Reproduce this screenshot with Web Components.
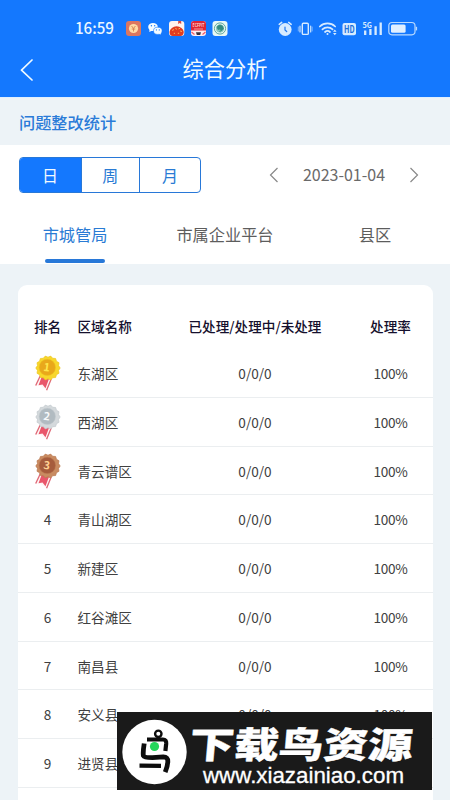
<!DOCTYPE html>
<html lang="zh-CN"><head><meta charset="utf-8"><title>综合分析</title>
<style>
html,body{margin:0;padding:0}
body{width:450px;height:800px;overflow:hidden;background:#edf3f7;font-family:"Noto Sans CJK SC",sans-serif}
</style></head><body>
<analysis-page></analysis-page>
<script>
function define(name, render){
  customElements.define(name, class extends HTMLElement{
    connectedCallback(){
      if(this.shadowRoot) return;
      this.attachShadow({mode:'open'}).innerHTML = render(this);
    }
  });
}

define('status-bar', () => `
<style>:host{display:block;height:42px}svg{display:block}text{font-family:"Noto Sans CJK SC",sans-serif}</style>
<svg width="450" height="42" viewBox="0 0 450 42" fill="none">
 <text x="75" y="34.1" font-size="15.4" font-weight="500" fill="#e9f6ff" textLength="39" lengthAdjust="spacingAndGlyphs">16:59</text>
 <rect x="126" y="21" width="15" height="15" rx="3" fill="#dc765f"/><circle cx="133.5" cy="28.5" r="4.6" fill="#ffdba5"/>
 <path d="M131.6 26l1.9 2.5 1.9-2.5M133.5 28.5v3M131.8 29h3.4" stroke="#d4814f" stroke-width=".9"/>
 <ellipse cx="153" cy="27" rx="4.8" ry="4.1" fill="#f4fbff"/><path d="M149.6 29l-.3 3 3-1.4z" fill="#f4fbff"/>
 <ellipse cx="157.8" cy="30.8" rx="4.3" ry="3.6" fill="#f4fbff" stroke="#1478fe" stroke-width=".6"/><path d="M159 33l1.7 1.8.1-2.7z" fill="#f4fbff"/>
 <g fill="#1478fe"><circle cx="151.4" cy="25.8" r=".7"/><circle cx="154.7" cy="25.8" r=".7"/><circle cx="156.4" cy="29.9" r=".6"/><circle cx="159.3" cy="29.9" r=".6"/></g>
 <rect x="169" y="21" width="15.3" height="15" rx="3" fill="#fff3ed"/><path d="M169.5 32a7.2 6.5 0 0 1 14.3 0c-.2 2.8-1.6 4-3.2 4h-8c-1.8 0-3-1.3-3.1-4z" fill="#e13c21"/>
 <path d="M178.2 21h3v3.1l-1.5-1-1.5 1z" fill="#d64942"/><path d="M172.2 30.4l1.7-.8M175.4 28.5l1.5.7M178.5 28.9l1.5-.6M180.2 31l1.7.5M173.8 33.3h1.2M177.8 33.3h1.4" stroke="#ffbb58" stroke-width="1"/>
 <rect x="191" y="21" width="15" height="15" rx="3" fill="#ffecef"/><path d="M191 24a3 3 0 0 1 3-3h9a3 3 0 0 1 3 3v6.5h-15z" fill="#df2636"/>
 <text x="192.6" y="27.3" font-size="5" font-weight="700" fill="#ffd3cc" textLength="11.8" lengthAdjust="spacingAndGlyphs">ECFPIT</text>
 <path d="M194 29h9" stroke="#ffb9b0" stroke-width=".8"/><path d="M196 32.2h5l-.8 2.8h-3.4z" fill="#3b3440"/><path d="M191.5 32l3 2.5M205.5 32l-3 2.5" stroke="#ef5966" stroke-width="1.2"/>
 <rect x="212.5" y="21" width="15" height="15" rx="3" fill="#e9f8f3"/><circle cx="220" cy="28.5" r="5.6" stroke="#4e9f94" stroke-width=".9"/><circle cx="220" cy="28.5" r="4" fill="#8bc7bd"/>
 <path d="M217 27c2-3 4-2 5.5-1l1 3-2.5 2-1-2-2 .5zM219 31l2 1" fill="#338c80" stroke="#338c80" stroke-width=".7"/>
 <g stroke="#d7ebff" stroke-linecap="round">
  <circle cx="285.2" cy="29.5" r="6.4" fill="#d7ebff" stroke="none"/><path d="M279.2 24.4l2.5-2M291.2 24.4l-2.5-2" stroke-width="1.5"/><path d="M285 27v3l1.7 1.5" stroke="#2278ee" stroke-width="1.2"/>
  <rect x="302.3" y="23.2" width="6" height="11.2" rx="1" stroke-width="1.4"/><path d="M300 26v6M310.7 26v6" stroke-width="1.1"/><path d="M298.3 27v4M312.2 27v4" stroke-width=".5"/>
  <path d="M319.8 26.5a11.3 11.3 0 0 1 15.4 0M322.4 29.4a7.3 7.3 0 0 1 10.2 0M325 32a3.7 3.7 0 0 1 5 0" stroke-width="1.7"/><circle cx="327.5" cy="34" r="1" fill="#d7ebff" stroke="none"/>
 </g>
 <path d="M333 31.7l1.8-2.2 1.8 2.2zM333 33l1.8 2.2 1.8-2.2z" fill="#d7ebff"/>
 <rect x="342.5" y="23" width="13.5" height="12.3" rx="2" fill="#d7ebff"/><text x="344" y="33" font-size="10" font-weight="700" fill="#1d70da" textLength="10.6" lengthAdjust="spacingAndGlyphs">HD</text>
 <text x="362.5" y="28" font-size="7.5" font-weight="700" fill="#d7ebff" textLength="9.5" lengthAdjust="spacingAndGlyphs">5G</text>
 <path d="M365.2 35v-4.5M370.4 35v-6M375.6 35v-8.8M380.7 35V22.6" stroke="#d7ebff" stroke-width="2.3"/>
 <rect x="388.8" y="22.5" width="26.2" height="12.3" rx="3.2" stroke="#b8d9ff" stroke-width="1.2"/><rect x="391" y="24.5" width="14.6" height="8.2" rx="1.5" fill="#e0efff"/><path d="M416.4 26.8v3.6" stroke="#b8d9ff" stroke-width="1.4"/>
</svg>`);

define('nav-bar', () => `
<style>:host{display:grid;grid-template-columns:60px 1fr 60px;height:55px;align-items:center;color:#f0faff}
svg{display:block;margin-left:20px}h1{font-size:21.2px;line-height:30px;margin:0;padding-bottom:3px;text-align:center;font-weight:400}</style>
<svg width="14" height="22" viewBox="0 0 14 22" fill="none" stroke="currentColor" stroke-width="1.7" stroke-linecap="round" stroke-linejoin="round"><path d="M12 1L1.5 11.2 12 21"/></svg>
<h1><slot></slot></h1>`);

define('section-title', () => `
<style>:host{display:flex;height:47.5px;padding:0 19px;align-items:center;box-sizing:border-box;border-top:1px solid #dfefff;color:#2a7bd8;font-size:16.2px;font-weight:500;line-height:24px}
span{padding-top:1px}</style><span><slot></slot></span>`);

define('period-switch', () => `
<style>:host{display:grid;grid-template-columns:61px 58.5px 1fr;width:182.5px;height:36.5px;box-sizing:border-box;border:1.5px solid #2878d8;border-radius:4px;overflow:hidden;color:#2a7bd4;font-size:16px}
span{display:flex;align-items:center;justify-content:center;border-left:1.5px solid #2878d8}
.on{background:#1478fe;color:#f2faff;border-left:0}</style>
<span class="on">日</span><span>周</span><span>月</span>`);

define('date-picker', () => `
<style>:host{display:flex;align-items:center;justify-content:space-between;width:150px;color:#6a6a6a;font-size:16px}
svg{display:block}span{padding-bottom:1px}</style>
<svg width="10" height="16" viewBox="0 0 10 16" fill="none" stroke="#888" stroke-width="1.2"><path d="M8.5 1L1.5 8l7 7"/></svg>
<span><slot></slot></span>
<svg width="10" height="16" viewBox="0 0 10 16" fill="none" stroke="#888" stroke-width="1.2"><path d="M1.5 1l7 7-7 7"/></svg>`);

define('tab-item', () => `
<style>:host{display:flex;flex-direction:column;align-items:center;justify-content:space-between;width:150px;color:#5d5d5d;font-size:16.2px;line-height:24px}
i{display:block;width:60px;height:4px;border-radius:2px}
:host([active]){color:#2a7bd4}:host([active]) i{background:#2878d8}</style><slot></slot><i></i>`);

define('filter-panel', () => `
<style>:host{display:flex;flex-direction:column;height:119px;background:#fff;box-sizing:border-box;padding-top:12px}
.top{display:flex;height:36.5px;justify-content:space-between;padding:0 31px 0 18.5px;align-items:center}
.tabs{display:flex;margin-top:29px;height:41px}</style>
<div class="top"><period-switch></period-switch><date-picker>2023-01-04</date-picker></div>
<div class="tabs"><tab-item active>市城管局</tab-item><tab-item>市属企业平台</tab-item><tab-item>县区</tab-item></div>`);

define('rank-medal', el => {
  const rank = el.getAttribute('rank');
  const [rim, edge, face, ink] = {1:['#f8d72c','#ecc51e','#e9a81b','#ffe64c'],2:['#d4d9dc','#c1c9cd','#b1bbc1','#f7f9fa'],3:['#c98b61','#b9774f','#a65c3d','#ffd092']}[rank];
  let d = '';
  for(let i=0;i<28;i++){
    const a=i*Math.PI/14, r=i%2?10.8:12.2;
    d+=(i?'L':'M')+(15+r*Math.cos(a)).toFixed(2)+' '+(13+r*Math.sin(a)).toFixed(2);
  }
  return `<style>:host{display:block;width:30px;height:36px}svg{display:block}text{font-family:"Noto Sans CJK SC",sans-serif}</style>
<svg width="30" height="36" viewBox="0 0 30 36">
 <path d="M6.5 20L1.8 30.8 7 30.5l7.2 4.8 4.6-12z" fill="#fff4f4"/>
 <path d="M7.2 21l-4.5 9.5M18.2 24l-4.6 11.2" stroke="#df6876" stroke-width="1.3"/>
 <path d="M9 21L5.5 30.3l4-.8 3 3.7L16.3 23z" fill="#e9566b"/>
 <path d="${d}Z" fill="${rim}" stroke="${edge}" stroke-width=".7" stroke-linejoin="round"/>
 <circle cx="14.3" cy="12.4" r="8.2" fill="${face}" stroke="${edge}" stroke-width=".5"/>
 <text x="13.6" y="16.2" text-anchor="middle" font-size="11" font-weight="700" fill="${ink}" transform="rotate(8 14 13)">${rank}</text>
</svg>`;
});

define('rank-row', el => {
  const rank = el.getAttribute('rank');
  const plain = el.hasAttribute('name-only');
  return `<style>:host{display:grid;grid-template-columns:60px 120px 115px 1fr;height:48.75px;box-sizing:border-box;padding-top:.6px;border-bottom:1.3px solid #ebeef0;align-items:center;font-size:13.6px;line-height:20px;color:#404040}
.c{text-align:center}.m{display:flex;justify-content:center}.r{padding-left:36px;letter-spacing:-.3px}</style>
<div class="${rank<4?'m':'c'}">${rank<4?`<rank-medal rank="${rank}"></rank-medal>`:rank}</div><div><slot></slot></div>${plain?'':'<div class="c">0/0/0</div><div class="c r">100%</div>'}`;
});

define('rank-table', () => {
  const names=['东湖区','西湖区','青云谱区','青山湖区','新建区','红谷滩区','南昌县','安义县','进贤县'];
  return `<style>:host{display:block;background:#fff;border-radius:9px 9px 0 0;padding-top:20px;height:520px;box-sizing:border-box}
.h{display:grid;grid-template-columns:60px 95px 165px 1fr;height:44.5px;box-sizing:border-box;padding-bottom:2px;align-items:center;font-size:13.6px;font-weight:500;color:#15102d;white-space:nowrap}
.h *{text-align:center}.h :nth-child(2){text-align:left}.h :last-child{padding-left:11px}</style>
<div class="h"><span>排名</span><span>区域名称</span><span>已处理/处理中/未处理</span><span>处理率</span></div>
${names.map((n,i)=>`<rank-row rank="${i+1}"${i===8?' name-only':''}>${n}</rank-row>`).join('')}`;
});

define('site-watermark', () => `
<style>:host{display:block;position:absolute;left:117px;top:712px;width:315px;height:78px;background:#1a1a1a}svg{display:block}</style>
<svg width="315" height="78" viewBox="0 0 315 78">
 <circle cx="37.5" cy="40" r="32.2" fill="#fff"/>
 <g fill="none" stroke="#0d0d0d" stroke-linejoin="round">
  <circle cx="41.3" cy="21.8" r="3.2" stroke-width="2.4"/>
  <path d="M30 27.5h16q3.5 0 3.2 4l-.8 7.5" stroke-width="4.2"/>
  <path d="M27.2 31.5q-1.4 9-.8 12.2 1 2 9 2l11-.8q4.6 0 4.4 4.7-.2 5-2.6 10.5" stroke-width="4.8"/>
  <path d="M22.5 53.6l21.5.3" stroke-width="4.4"/>
 </g>
 <circle cx="37.5" cy="34.5" r="4.6" fill="#24d65b"/>
 <text transform="translate(71.5 45.8) skewX(-5) scale(1.22 1)" font-family="Noto Sans CJK SC" font-size="36" font-weight="900" fill="#fff" stroke="#fff" stroke-width=".4" textLength="183" lengthAdjust="spacingAndGlyphs">下载鸟资源</text>
 <text x="86" y="70.5" font-family="Liberation Sans" font-size="22" fill="#fff" stroke="#fff" stroke-width=".3" textLength="201" lengthAdjust="spacingAndGlyphs">www.xiazainiao.com</text>
</svg>`);

define('analysis-page', () => `
<style>:host{display:block;position:relative;width:450px;height:800px;overflow:hidden;background:#edf3f7}
header{background:#1478fe;height:97px}main{padding:21px 17.5px 0}</style>
<header><status-bar></status-bar><nav-bar>综合分析</nav-bar></header>
<section-title>问题整改统计</section-title>
<filter-panel></filter-panel>
<main><rank-table></rank-table></main>
<site-watermark></site-watermark>`);
</script></body></html>
